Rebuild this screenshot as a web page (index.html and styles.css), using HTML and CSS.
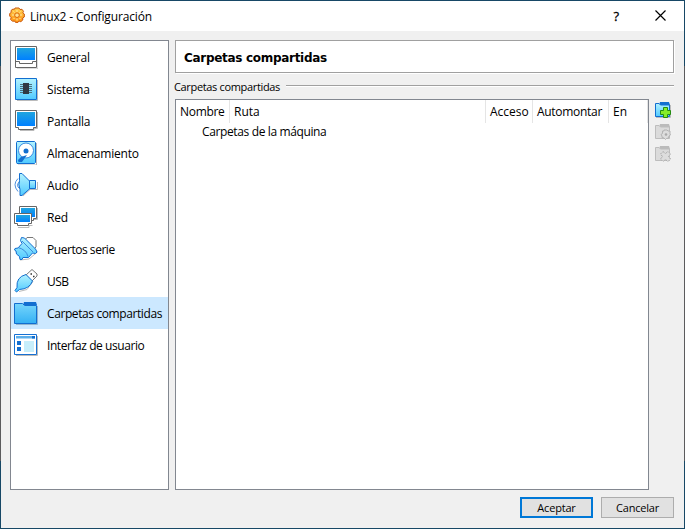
FILE: index.html
```html
<!DOCTYPE html>
<html lang="es">
<head>
<meta charset="utf-8">
<title>Linux2 - Configuración</title>
<link rel="stylesheet" href="styles.css">
</head>
<body>
<svg width="0" height="0" class="defs" aria-hidden="true">
  <defs>
    <linearGradient id="screen" x1="0" y1="0" x2="0" y2="1"><stop offset="0" stop-color="#20a5df"/><stop offset="1" stop-color="#0080ff"/></linearGradient>
    <linearGradient id="cyan" x1="0" y1="0" x2="0" y2="1"><stop offset="0" stop-color="#b4f2fe"/><stop offset="1" stop-color="#50caff"/></linearGradient>
    <linearGradient id="folder" x1="0" y1="0" x2="0" y2="1"><stop offset="0" stop-color="#76d5fb"/><stop offset="1" stop-color="#34b1f4"/></linearGradient>
    <linearGradient id="gold" x1="0" y1="0" x2="0" y2="1"><stop offset="0" stop-color="#ffd050"/><stop offset="1" stop-color="#ff9414"/></linearGradient>
  </defs>
</svg>
<div class="window">
  <header class="titlebar">
    <svg class="app-icon" viewBox="0 0 16 16"><path d="M6 1h4l1 1.500 2-.2 1.500 2-.7 1.500L15.300 7v3l-1.600 1 .1 2-2 1.700-1.700-.7L9 15.400H6.500L5.500 14l-2 .3-2-2 .7-1.600L.7 9V6.500l1.500-1L2 3.500 4 2l1.300.5z" fill="url(#gold)" stroke="#c9570c"/><circle cx="8" cy="8.200" r="2.300" fill="#ffe391" stroke="#d9670b"/><path d="M8 3v2M8 11.500v2M3 8h2M11 8h2M4.500 4.500l1 1M11.500 4.500l-1 1M4.500 12l1-1M11.500 12l-1-1" stroke="#ffe9a8"/></svg>
    <h1>Linux2 - Configuración</h1>
    <span class="help">?</span>
    <svg class="close" viewBox="0 0 11 11"><path d="M.5.5l10 10M10.500.5l-10 10" stroke="#000" stroke-width="1.200" fill="none"/></svg>
  </header>
  <main>
    <nav>
      <a><svg viewBox="0 0 24 24"><path d="M3 24h21V3" stroke="#bbb" fill="none"/><path d="M1.500 1.500h21v21h-21z" fill="#fff" stroke="#666"/><path d="M3 3h18v12H3z" fill="url(#screen)"/><path d="M1.500 16.500h4v2h13v-2h4" fill="none" stroke="#666"/></svg><span class="t-general">General</span></a>
      <a><svg viewBox="0 0 24 24"><path d="M3 23.500h20.500V3" stroke="#bbb" fill="none"/><path d="M1.500 1.500h21v21h-21z" fill="url(#cyan)" stroke="#126ed0"/><path d="M6 7.500h12M6 9.500h12M6 11.500h12M6 13.500h12M6 15.500h12" stroke="#4d7180"/><path d="M9 6h6v11H9z" fill="#303944"/></svg><span class="t-sistema">Sistema</span></a>
      <a><svg viewBox="0 0 24 24"><path d="M6 21.500h14v-2h3.500V3" fill="none" stroke="#bbb"/><path d="M1.500 1.500h21v17h-3v2h-15v-2h-3z" fill="#fff" stroke="#666"/><path d="M3 3h18v14H3z" fill="url(#screen)"/></svg><span class="t-pantalla">Pantalla</span></a>
      <a><svg viewBox="0 0 24 24"><path d="M4 24h18.500V2" fill="none" stroke="#bbb"/><path d="M3 .5h17.500l1 1v20l-1 1H3l-.5-1v-20z" fill="url(#cyan)" stroke="#126ed0"/><circle cx="12" cy="9.500" r="7.500" fill="#fff" stroke="#388ae0"/><circle cx="12" cy="10" r="2.500" fill="#126ed0"/><path d="M13 14l-6 2-3 3 .5 2H8z" fill="#126ed0"/></svg><span class="t-almacen">Almacenamiento</span></a>
      <a><svg viewBox="0 0 24 24"><path d="M9 23l7-6.500h7.500V9" fill="none" stroke="#bbb"/><path d="M4 5.500q-6 6 0 13M5.500 8.500q-4 4 0 7" fill="none" stroke="#4f92df"/><path d="M5.500.5H8l8 8v7l-8 7H6v-6q-2-5-.5-9z" fill="url(#cyan)" stroke="#126ed0"/><path d="M15.500 7.500h6v8h-6z" fill="url(#cyan)" stroke="#126ed0"/></svg><span class="t-audio">Audio</span></a>
      <a><svg viewBox="0 0 24 24"><path d="M19 14.500h4.500V3M4 22.500h11v-2h3.500" fill="none" stroke="#bbb"/><path d="M5.500 1.500h17v12h-3v2h-11v-2h-3z" fill="#fff" stroke="#666"/><path d="M7 3h14v9H7z" fill="url(#screen)"/><path d="M.5 8.500h17v10h-3v2h-11v-2h-3z" fill="#fff" stroke="#666"/><path d="M2 10h14v7H2z" fill="url(#screen)"/></svg><span class="t-red">Red</span></a>
      <a><svg viewBox="0 0 24 24"><path d="M11 3l2-2.500h6l3 3V10l-3 3z" fill="#fff" stroke="#777"/><path d="M6 23l9-1 8.500-7" fill="none" stroke="#bbb"/><path d="M7.500.5l3 .5 11 11 1.500 3-1.500 1.500-3-.5-4 4.500H9l-1 2H6l-.5-3L2.500 17l-.5-3-1.500-1 .5-1.500 3-.5 4-4.500-1.500-3z" fill="url(#cyan)" stroke="#126ed0"/><path d="M8 4l11 11M4 10.500q8 2 10 9" fill="none" stroke="#3c8bdc"/></svg><span class="t-serie">Puertos serie</span></a>
      <a><svg viewBox="0 0 24 24"><path d="M12 6l6-5.500L23 5v2l-5.500 5.500z" fill="#fff" stroke="#777"/><path d="M16.500 5H18M19 7.500h1.500" stroke="#333" stroke-width="1.500"/><path d="M5 22.500l8-2 6-8" fill="none" stroke="#bbb"/><path d="M12 5.500l6.500 6.500q-3 8-13 8.500l-3 2.500-1.500-1.500L3 18.500Q2 8 12 5.500z" fill="url(#cyan)" stroke="#126ed0"/></svg><span class="t-usb">USB</span></a>
      <a class="selected"><svg viewBox="0 0 24 24"><path d="M2 23.500h21.500V5" fill="none" stroke="#8fb5cf"/><path d="M9 4l1-3h12l1 3z" fill="#126ed0"/><path d="M.5 2.500h8l2 2h12v18H.5z" fill="url(#folder)" stroke="#126ed0"/></svg><span class="t-carpetas">Carpetas compartidas</span></a>
      <a><svg viewBox="0 0 24 24"><path d="M2 22.500h21.500V3" fill="none" stroke="#bbb"/><path d="M.5 1.500h22v20H.5z" fill="#fff" stroke="#1771d3"/><path d="M2 3h19v2.500H2z" fill="#5eafea"/><path d="M18 3h3v2.500h-3z" fill="#126ed0"/><path d="M3 8h4v4H3zM3 14h4v4H3z" fill="#126ed0"/><path d="M10 8h10v11H10z" fill="#c7eefb"/></svg><span class="t-interfaz">Interfaz de usuario</span></a>
    </nav>
    <section class="page">
      <h2><span>Carpetas compartidas</span></h2>
      <div class="group-title"><span>Carpetas compartidas</span><i></i></div>
      <div class="group">
        <div class="tree">
          <div class="columns"><div><span class="t-nombre">Nombre</span></div><div><span class="t-ruta">Ruta</span></div><div><span class="t-acceso">Acceso</span></div><div><span class="t-auto">Automontar</span></div><div><span class="t-en">En</span></div></div>
          <div class="row"><span class="t-maquina">Carpetas de la máquina</span></div>
        </div>
        <div class="tools">
          <svg viewBox="0 0 16 16"><path d="M1 15.500h14.500V3" stroke="#bbb" fill="none"/><path d="M4 3l1-3h9l1 3z" fill="#126ed0"/><path d="M.5 1.500H4l1.500 1.500h9v11.500H.5z" fill="url(#cyan)" stroke="#126ed0"/><path d="M8.500 5.500h4v3h3v4h-3v3h-4v-3h-3v-4h3z" fill="#86ed2a" stroke="#238c12"/></svg>
          <svg viewBox="0 0 16 16"><path d="M4 3l1-3h9l1 3z" fill="#bbb"/><path d="M.5 1.500H4l1.500 1.500h9v11.500H.5z" fill="#dbdbdb" stroke="#bdbdbd"/><path d="M9 6h3l1 1h2v3l.5 1-1.500 1-.5 2-2 .5-1 1-1.500-1.500-2-.5V12L6 10.500l1.500-1V7H9z" fill="#ddd" stroke="#b3b3b3"/><circle cx="11" cy="10.500" r="1.300" fill="#aaa"/></svg>
          <svg viewBox="0 0 16 16"><path d="M4 3l1-3h9l1 3z" fill="#bbb"/><path d="M.5 1.500H4l1.500 1.500h9v11.500H.5z" fill="#dbdbdb" stroke="#bdbdbd"/><path d="M8 5.500l2.500 2 2.500-2 2.500 2.500-2 2.500 2 2.500-2.500 2.500-2.500-2-2.500 2L5.500 13l2-2.500-2-2.500z" fill="#ddd" stroke="#aaa" stroke-dasharray="2 1"/></svg>
        </div>
      </div>
    </section>
  </main>
  <footer><button class="primary"><span>Aceptar</span></button><button><span>Cancelar</span></button></footer>
</div>
</body>
</html>
```

FILE: styles.css
```css
* { box-sizing: border-box; }
body { margin: 0; font: 12px/16px "Open Sans", "Noto Sans", sans-serif; color: #000; overflow: hidden; }
.defs { display: block; }
span { white-space: nowrap; }
.window {
  width: 685px; height: 529px; padding: 1px;
  display: flex; flex-direction: column;
  background: linear-gradient(#f0f0f0, #f0f0f0) content-box,
    linear-gradient(#174866 0 66px, #5b5b5d 66px 461px, #174866 461px);
}
.titlebar { height: 30px; background: #fff; display: flex; align-items: center; padding: 0 18px 0 8px; }
.app-icon { width: 16px; height: 16px; margin-right: 5px; margin-top: -2px; }
h1 { margin: 0; padding-top: 1px; font-size: 12px; font-weight: 400; letter-spacing: -.15px; white-space: nowrap; }
.help { margin-left: auto; font-size: 13px; -webkit-text-stroke: .3px #000; }
.close { width: 11px; height: 11px; margin-left: 36px; margin-top: -2px; }
main { flex: 1; min-height: 0; display: flex; gap: 6px; padding: 9px 10px 0 9px; }
nav { width: 159px; height: 450px; background: #fff; border: 1px solid #828790; }
nav a { height: 32px; display: flex; align-items: center; gap: 9px; padding-left: 3px; }
nav a svg { width: 24px; height: 24px; flex: none; }
nav a span { padding-top: 2px; letter-spacing: -.2px; }
nav a .t-serie { letter-spacing: -.46px; }
nav a .t-usb { letter-spacing: -.6px; }
nav a .t-carpetas { letter-spacing: -.4px; }
nav a .t-interfaz { letter-spacing: -.43px; }
nav a.selected { background: #cce8ff; }
.page { flex: 1; min-width: 0; height: 450px; display: flex; flex-direction: column; }
h2 { height: 33px; margin: 0; padding: 2px 0 0 8px; background: #fff; border: 1px solid #a0a0a0; box-shadow: 1px 1px #fff; display: flex; align-items: center; font: bold 12px/16px "DejaVu Sans", sans-serif; }
h2 span { letter-spacing: -.3px; }
.group-title { height: 26px; display: flex; align-items: center; gap: 6px; padding-top: 2px; font-size: 11px; margin-left: -1px; }
.group-title span { letter-spacing: -.34px; width: 106px; }
.group-title i { flex: 1; height: 2px; margin-top: -2px; border-top: 1px solid #a0a0a0; border-bottom: 1px solid #fff; }
.group { flex: 1; display: flex; gap: 6px; }
.tree { width: 474px; background: #fff; border: 1px solid #828790; }
.columns { height: 23px; display: grid; grid-template-columns: 54px 256px 47px 76px 39px; }
.columns div { display: flex; align-items: center; padding-left: 4px; border-right: 1px solid #e5e5e5; }
.t-nombre, .t-auto { letter-spacing: -.3px; }
.row { height: 18px; padding: 1px 0 0 26px; letter-spacing: -.37px; }
.tools { width: 16px; margin-right: -4px; padding-top: 3px; display: flex; flex-direction: column; gap: 6px; }
.tools svg { width: 16px; height: 16px; flex: none; }
footer { height: 38px; display: flex; justify-content: flex-end; gap: 8px; padding: 7px 10px 0 0; }
button { width: 73px; height: 21px; padding: 0; border: 1px solid #adadad; background: #e1e1e1; color: #000; font: 11px/17px "Open Sans", sans-serif; letter-spacing: -.2px; }
button.primary { border: 2px solid #0078d7; }
```
